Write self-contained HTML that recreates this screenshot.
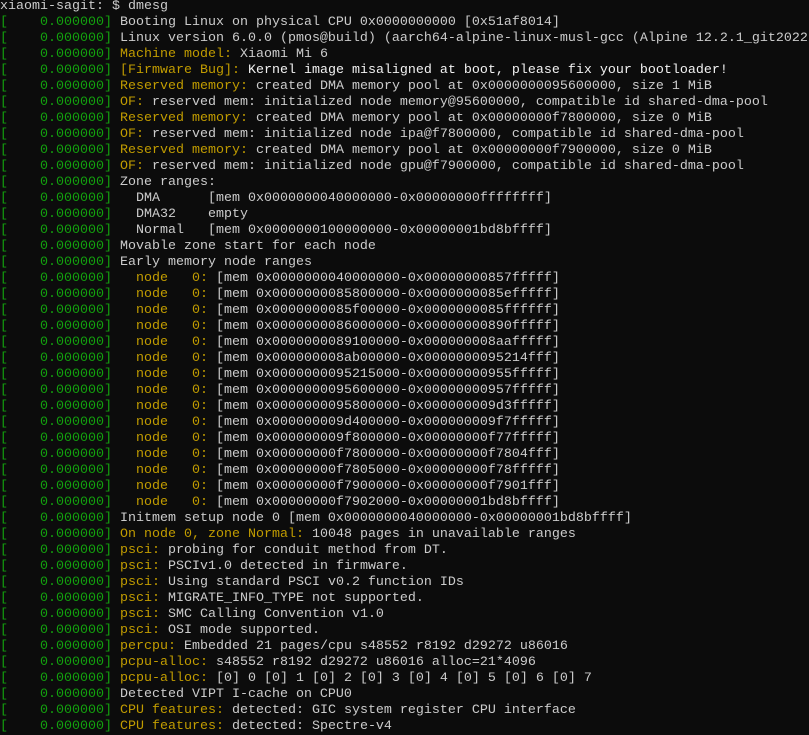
<!DOCTYPE html>
<html><head><meta charset="utf-8"><style>
html,body{margin:0;padding:0;background:#0c0c0c;width:809px;height:735px;overflow:hidden}
pre{margin:0;padding:0;position:absolute;top:-1px;left:0;font-family:"Liberation Mono",monospace;font-size:13.33px;line-height:16px;color:#cccccc;white-space:pre}
.g{color:#13a10e}.y{color:#c19c00}.w{color:#f2f2f2}
</style></head><body><pre>xiaomi-sagit: $ dmesg
<span class="g">[    0.000000]</span> Booting Linux on physical CPU 0x0000000000 [0x51af8014]
<span class="g">[    0.000000]</span> Linux version 6.0.0 (pmos@build) (aarch64-alpine-linux-musl-gcc (Alpine 12.2.1_git2022
<span class="g">[    0.000000]</span> <span class="y">Machine model: </span>Xiaomi Mi 6
<span class="g">[    0.000000]</span> <span class="y">[Firmware Bug]: </span><span class="w">Kernel image misaligned at boot, please fix your bootloader!</span>
<span class="g">[    0.000000]</span> <span class="y">Reserved memory: </span>created DMA memory pool at 0x0000000095600000, size 1 MiB
<span class="g">[    0.000000]</span> <span class="y">OF: </span>reserved mem: initialized node memory@95600000, compatible id shared-dma-pool
<span class="g">[    0.000000]</span> <span class="y">Reserved memory: </span>created DMA memory pool at 0x00000000f7800000, size 0 MiB
<span class="g">[    0.000000]</span> <span class="y">OF: </span>reserved mem: initialized node ipa@f7800000, compatible id shared-dma-pool
<span class="g">[    0.000000]</span> <span class="y">Reserved memory: </span>created DMA memory pool at 0x00000000f7900000, size 0 MiB
<span class="g">[    0.000000]</span> <span class="y">OF: </span>reserved mem: initialized node gpu@f7900000, compatible id shared-dma-pool
<span class="g">[    0.000000]</span> Zone ranges:
<span class="g">[    0.000000]</span>   DMA      [mem 0x0000000040000000-0x00000000ffffffff]
<span class="g">[    0.000000]</span>   DMA32    empty
<span class="g">[    0.000000]</span>   Normal   [mem 0x0000000100000000-0x00000001bd8bffff]
<span class="g">[    0.000000]</span> Movable zone start for each node
<span class="g">[    0.000000]</span> Early memory node ranges
<span class="g">[    0.000000]</span> <span class="y">  node   0: </span>[mem 0x0000000040000000-0x00000000857fffff]
<span class="g">[    0.000000]</span> <span class="y">  node   0: </span>[mem 0x0000000085800000-0x0000000085efffff]
<span class="g">[    0.000000]</span> <span class="y">  node   0: </span>[mem 0x0000000085f00000-0x0000000085ffffff]
<span class="g">[    0.000000]</span> <span class="y">  node   0: </span>[mem 0x0000000086000000-0x00000000890fffff]
<span class="g">[    0.000000]</span> <span class="y">  node   0: </span>[mem 0x0000000089100000-0x000000008aafffff]
<span class="g">[    0.000000]</span> <span class="y">  node   0: </span>[mem 0x000000008ab00000-0x0000000095214fff]
<span class="g">[    0.000000]</span> <span class="y">  node   0: </span>[mem 0x0000000095215000-0x00000000955fffff]
<span class="g">[    0.000000]</span> <span class="y">  node   0: </span>[mem 0x0000000095600000-0x00000000957fffff]
<span class="g">[    0.000000]</span> <span class="y">  node   0: </span>[mem 0x0000000095800000-0x000000009d3fffff]
<span class="g">[    0.000000]</span> <span class="y">  node   0: </span>[mem 0x000000009d400000-0x000000009f7fffff]
<span class="g">[    0.000000]</span> <span class="y">  node   0: </span>[mem 0x000000009f800000-0x00000000f77fffff]
<span class="g">[    0.000000]</span> <span class="y">  node   0: </span>[mem 0x00000000f7800000-0x00000000f7804fff]
<span class="g">[    0.000000]</span> <span class="y">  node   0: </span>[mem 0x00000000f7805000-0x00000000f78fffff]
<span class="g">[    0.000000]</span> <span class="y">  node   0: </span>[mem 0x00000000f7900000-0x00000000f7901fff]
<span class="g">[    0.000000]</span> <span class="y">  node   0: </span>[mem 0x00000000f7902000-0x00000001bd8bffff]
<span class="g">[    0.000000]</span> Initmem setup node 0 [mem 0x0000000040000000-0x00000001bd8bffff]
<span class="g">[    0.000000]</span> <span class="y">On node 0, zone Normal: </span>10048 pages in unavailable ranges
<span class="g">[    0.000000]</span> <span class="y">psci: </span>probing for conduit method from DT.
<span class="g">[    0.000000]</span> <span class="y">psci: </span>PSCIv1.0 detected in firmware.
<span class="g">[    0.000000]</span> <span class="y">psci: </span>Using standard PSCI v0.2 function IDs
<span class="g">[    0.000000]</span> <span class="y">psci: </span>MIGRATE_INFO_TYPE not supported.
<span class="g">[    0.000000]</span> <span class="y">psci: </span>SMC Calling Convention v1.0
<span class="g">[    0.000000]</span> <span class="y">psci: </span>OSI mode supported.
<span class="g">[    0.000000]</span> <span class="y">percpu: </span>Embedded 21 pages/cpu s48552 r8192 d29272 u86016
<span class="g">[    0.000000]</span> <span class="y">pcpu-alloc: </span>s48552 r8192 d29272 u86016 alloc=21*4096
<span class="g">[    0.000000]</span> <span class="y">pcpu-alloc: </span>[0] 0 [0] 1 [0] 2 [0] 3 [0] 4 [0] 5 [0] 6 [0] 7
<span class="g">[    0.000000]</span> Detected VIPT I-cache on CPU0
<span class="g">[    0.000000]</span> <span class="y">CPU features: </span>detected: GIC system register CPU interface
<span class="g">[    0.000000]</span> <span class="y">CPU features: </span>detected: Spectre-v4
</pre></body></html>
